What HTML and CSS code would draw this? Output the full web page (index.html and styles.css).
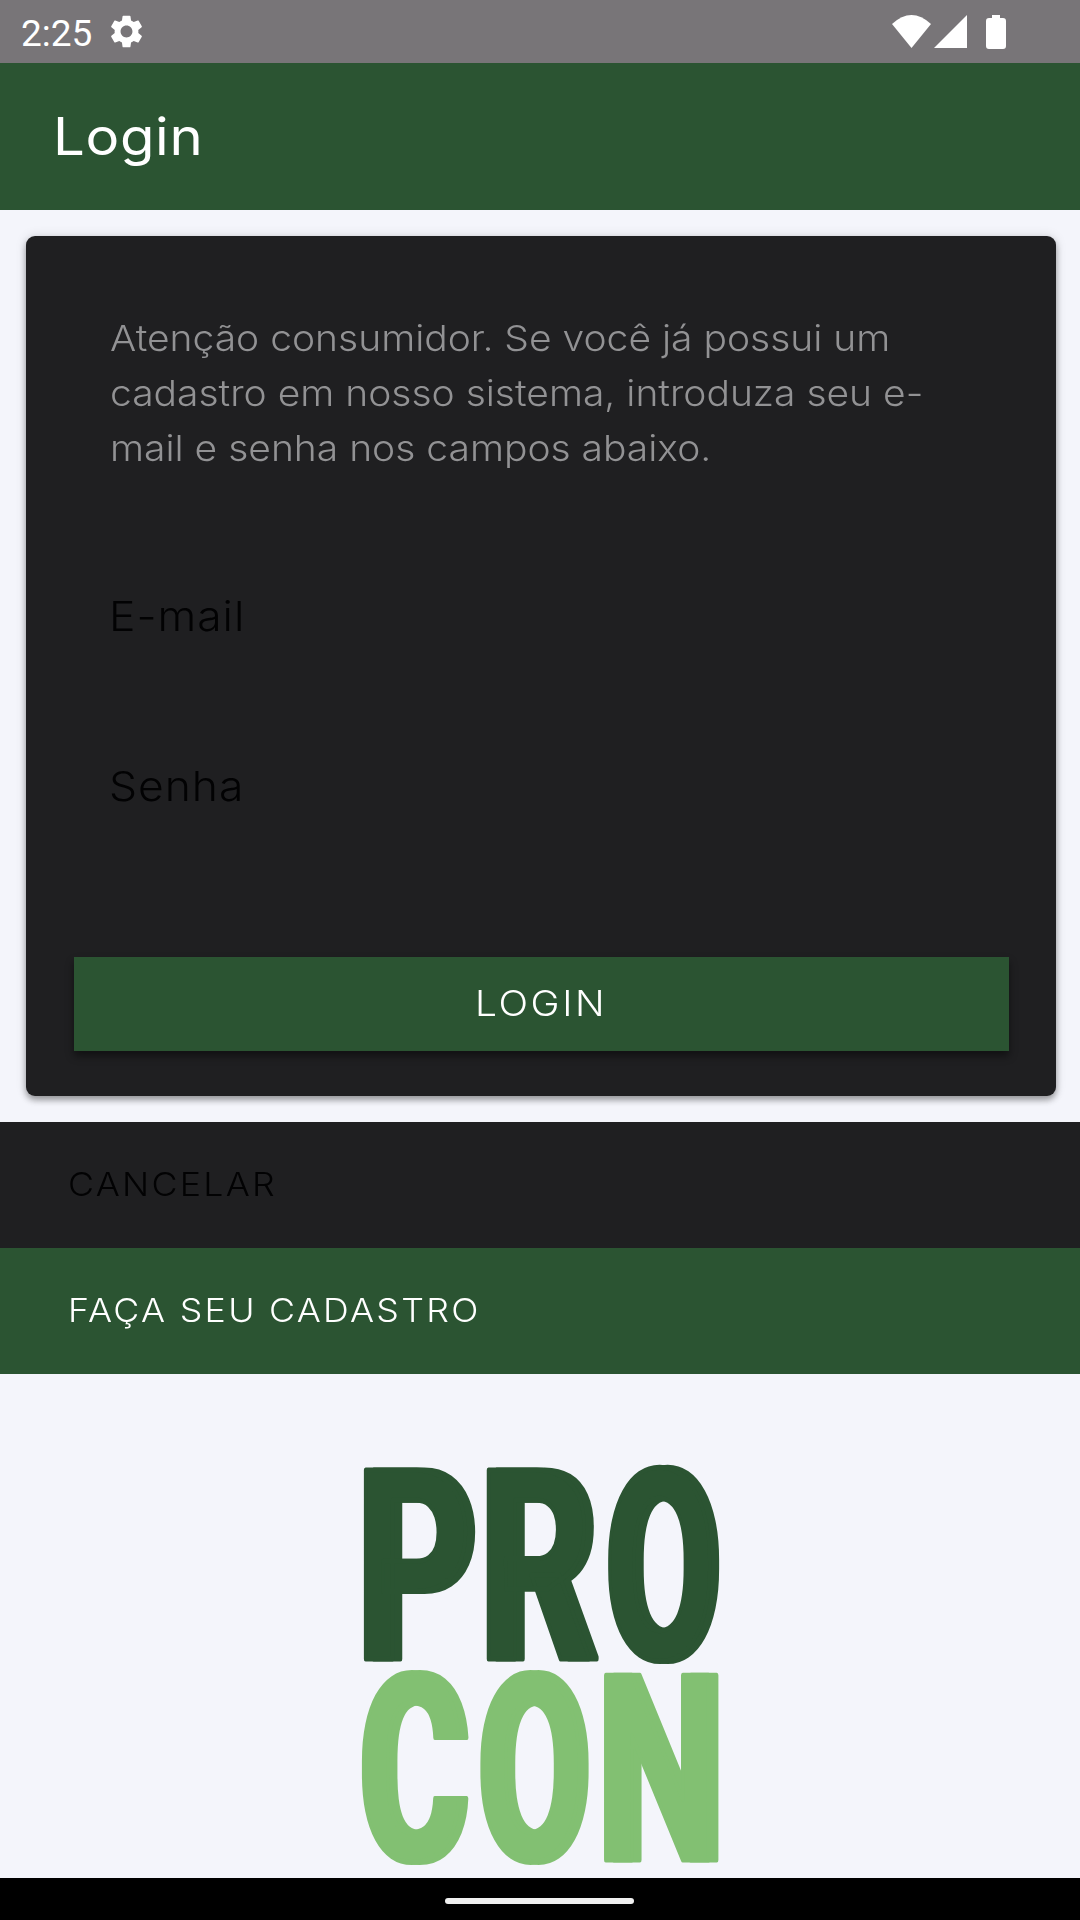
FILE: index.html
```
<!DOCTYPE html>
<html lang="pt-BR">
<head>
    <meta charset="UTF-8">
    <meta name="viewport" content="width=device-width, initial-scale=1.0">
    <title>Login</title>
    <link rel="stylesheet" href="styles.css">
</head>
<body>
    <div class="status-bar">
        <span class="clock">2:25</span>
        <svg class="gear" viewBox="2 2 20 20">
            <path d="M19.14 12.94c.04-.3.06-.61.06-.94 0-.32-.02-.64-.07-.94l2.03-1.58c.18-.14.23-.41.12-.61l-1.92-3.32c-.12-.22-.37-.29-.59-.22l-2.39.96c-.5-.38-1.03-.7-1.62-.94l-.36-2.54c-.04-.24-.24-.41-.48-.41h-3.84c-.24 0-.43.17-.47.41l-.36 2.54c-.59.24-1.13.57-1.62.94l-2.39-.96c-.22-.08-.47 0-.59.22L2.74 8.87c-.12.21-.08.47.12.61l2.03 1.58c-.05.3-.09.63-.09.94s.02.64.07.94l-2.03 1.58c-.18.14-.23.41-.12.61l1.92 3.32c.12.22.37.29.59.22l2.39-.96c.5.38 1.03.7 1.62.94l.36 2.54c.05.24.24.41.48.41h3.84c.24 0 .44-.17.47-.41l.36-2.54c.59-.24 1.13-.56 1.62-.94l2.39.96c.22.08.47 0 .59-.22l1.92-3.32c.12-.22.07-.47-.12-.61l-2.01-1.58zM12 15.6c-1.98 0-3.6-1.62-3.6-3.6s1.62-3.6 3.6-3.6 3.6 1.62 3.6 3.6-1.62 3.6-3.6 3.6z"/>
        </svg>
        <svg class="signals" viewBox="0 0 115 34">
            <path d="M0 9Q19.500-9 39 9L19.500 33z"/>
            <path d="M42 33L75 0V33z"/>
            <path d="M100 0h8v3h3q3 0 3 3v25q0 3-3 3H97q-3 0-3-3V6q0-3 3-3h3z"/>
        </svg>
    </div>
    <header class="app-bar">
        <h1 class="wide">Login</h1>
    </header>
    <main>
        <form class="card">
            <p class="message wide">
                Atenção consumidor. Se você já possui um<br>
                cadastro em nosso sistema, introduza seu e-<br>
                mail e senha nos campos abaixo.
            </p>
            <label class="field wide">E-mail</label>
            <label class="field wide">Senha</label>
            <button type="button" class="login"><span class="wide center">LOGIN</span></button>
        </form>
        <div class="row cancel"><span class="wide">CANCELAR</span></div>
        <div class="row register"><span class="wide">FAÇA SEU CADASTRO</span></div>
        <svg class="logo" viewBox="0 0 360 402">
            <g class="pro">
                <text transform="translate(-7 194) scale(.69 1)">P</text>
                <text transform="translate(116 194) scale(.681 1)">R</text>
                <text transform="translate(241.8 194) scale(.620 1)">O</text>
            </g>
            <g class="con">
                <text transform="translate(-4.4 395) scale(.632 1)">C</text>
                <text transform="translate(114.2 395) scale(.617 1)">O</text>
                <text transform="translate(233.5 395) scale(.684 1)">N</text>
            </g>
        </svg>
    </main>
    <footer class="nav-bar"><div class="handle"></div></footer>
</body>
</html>
```
FILE: styles.css
```
* {
    box-sizing: border-box;
}
body {
    display: flex;
    flex-direction: column;
    width: 1080px;
    height: 1920px;
    margin: 0;
    overflow: hidden;
    font-family: Inter, "Open Sans", sans-serif;
    font-weight: 300;
    background-color: #f4f5fb;
}
.wide {
    display: inline-block;
    transform: scaleX(1.083);
    transform-origin: left;
}
.center {
    transform-origin: center;
}
.status-bar {
    display: flex;
    align-items: center;
    height: 63px;
    padding: 0 73px 0 21px;
    color: white;
    background-color: #787578;
    fill: white;
}
.clock {
    font-family: Roboto, sans-serif;
    font-weight: 400;
    font-size: 37px;
    width: 89px;
    padding-top: 3px;
}
.gear {
    width: 33px;
    height: 33px;
}
.signals {
    width: 115px;
    height: 34px;
    margin-left: auto;
}
.app-bar {
    height: 147px;
    padding-left: 53px;
    color: white;
    background-color: #2b5432;
}
h1 {
    margin: 0;
    font-size: 52px;
    font-weight: 400;
    line-height: 148px;
    letter-spacing: .6px;
}
main {
    flex: 1;
    display: flex;
    flex-direction: column;
    padding-top: 26px;
}
.card {
    display: flex;
    flex-direction: column;
    height: 860px;
    margin: 0 24px 26px 26px;
    padding: 75px 47px 45px 48px;
    border-radius: 9px;
    background-color: #1f1f21;
    box-shadow: 0 4px 6px rgba(0, 0, 0, .35), 0 0 12px rgba(0, 0, 0, .12);
}
.message {
    margin: 0 0 85px 36px;
    color: #929294;
    font-size: 36px;
    line-height: 55px;
    white-space: nowrap;
}
.field {
    height: 170px;
    margin-left: 35px;
    color: #020203;
    font-size: 41px;
    line-height: 110px;
    letter-spacing: .9px;
}
.login {
    height: 94px;
    margin-top: auto;
    padding-bottom: 3px;
    border: none;
    color: white;
    background-color: #2b5432;
    box-shadow: 0 5px 8px rgba(0, 0, 0, .45);
    font-family: inherit;
    font-size: 36px;
    font-weight: 300;
    letter-spacing: 2.4px;
}
.row {
    flex: none;
    height: 126px;
    padding-left: 68px;
    font-size: 33px;
    line-height: 124px;
    letter-spacing: 2.1px;
}
.cancel {
    color: #020203;
    background-color: #1f1f21;
}
.register {
    color: white;
    background-color: #2b5432;
}
.logo {
    flex: none;
    width: 360px;
    height: 402px;
    margin: 91px 0 0 361px;
    overflow: visible;
    font-family: Roboto, sans-serif;
    font-weight: 700;
    stroke-width: 5;
    stroke-linejoin: round;
}
/* the shadow thickens the upright stems */
.pro {
    font-size: 266px;
    fill: #2b5432;
    stroke: #2b5432;
    filter: drop-shadow(8px 0 0 #2b5432);
}
.con {
    font-size: 260px;
    fill: #82c072;
    stroke: #82c072;
    filter: drop-shadow(8px 0 0 #82c072);
}
.nav-bar {
    display: flex;
    justify-content: center;
    height: 42px;
    padding: 20px 2px 0 0;
    background-color: black;
}
.handle {
    width: 189px;
    height: 6px;
    border-radius: 3px;
    background-color: #f0f0f0;
}
```
